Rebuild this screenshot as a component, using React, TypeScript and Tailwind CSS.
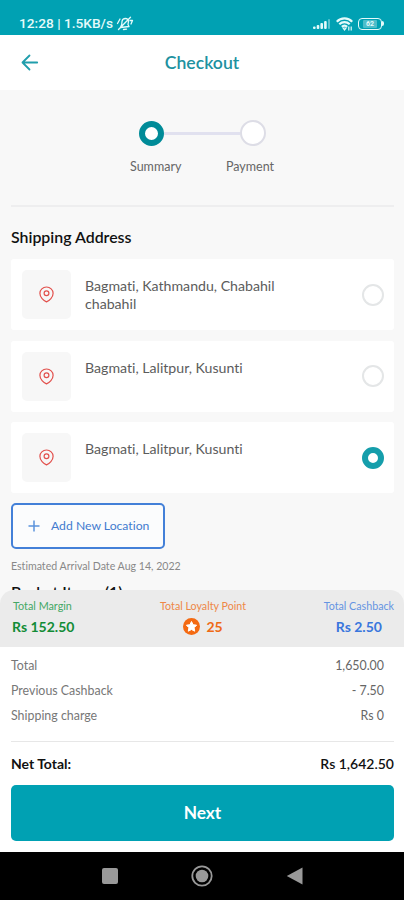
const addresses = [
  { id: 1, text: 'Bagmati, Kathmandu, Chabahil chabahil', selected: false },
  { id: 2, text: 'Bagmati, Lalitpur, Kusunti', selected: false },
  { id: 3, text: 'Bagmati, Lalitpur, Kusunti', selected: true },
]

const charges = [
  { label: 'Total', value: '1,650.00' },
  { label: 'Previous Cashback', value: '- 7.50' },
  { label: 'Shipping charge', value: 'Rs 0' },
]

function StatusBar() {
  return (
    <div className="flex h-[35px] shrink-0 items-end justify-between bg-[#00a1b3] pb-[4px] pl-[19px] pr-[20px] text-[#e4fafa]">
      <div className="flex items-center gap-[3px] font-['Roboto'] text-[13.700px] font-medium leading-[16px]">
        <span className="whitespace-nowrap">12:28 | 1.5KB/s</span>
        <svg width="18" height="15" viewBox="0 0 18 15" fill="none" stroke="currentColor" strokeWidth="1.300" strokeLinecap="round" strokeLinejoin="round">
          <path d="M4.500 11.500 13 10.500l-1-2 .5-3c.1-2-1.400-3-3-3S6.200 3.700 6 5.500L5.700 8.500zM7.500 13.500l3-.3M2.500 13.500 14.500 1.200M1.500 7.500 4 3M14 4.500h2.500L15 8" />
        </svg>
      </div>
      <div className="flex h-[16px] items-center gap-[5px] pt-[1px]">
        <svg width="18" height="12" viewBox="0 0 18 12" fill="currentColor">
          <rect x="0" y="8.500" width="2.600" height="2.500" rx="1" />
          <rect x="3.700" y="7" width="2.600" height="4" rx="1" />
          <rect x="7.400" y="5" width="2.600" height="6" rx="1" />
          <rect x="11.100" y="3" width="2.600" height="8" rx="1" />
          <rect x="15" y="1" width="2" height="10" rx="1" opacity=".4" />
        </svg>
        <svg width="17" height="14" viewBox="0 0 17 14" fill="none" stroke="currentColor" strokeWidth="2.200">
          <path d="M.8 4.700C5 .3 12 .3 16.200 4.700M3.300 7.300c3-2.900 7.400-2.900 10.400 0M5.800 9.800c1.600-1.500 3.800-1.500 5.400 0" />
          <path d="m7 11 1.500 2L10 11zM12.800 9.500v4M15.200 9.500v4" strokeWidth="1.200" />
        </svg>
        <div className="flex items-center">
          <div className="flex h-[12px] w-[24px] items-center justify-center rounded-[4px] border-[1.500px] border-current">
            <span className="rounded-[1px] bg-white/30 px-[3px] font-['Roboto'] text-[7px] font-bold leading-[8px]">62</span>
          </div>
          <div className="h-[5px] w-[2px] rounded-r bg-current" />
        </div>
      </div>
    </div>
  )
}

function Header() {
  return (
    <header className="grid h-[55px] shrink-0 grid-cols-[1fr_auto_1fr] items-center bg-white px-[21px]">
      <svg width="18" height="18" viewBox="0 0 18 18" fill="none" stroke="#209eac" strokeWidth="1.800" strokeLinecap="round" strokeLinejoin="round">
        <path d="M16.200 8.500H1.500M8.500 1.500 1.500 8.500l7 7" />
      </svg>
      <h1 className="text-[17.600px] font-semibold leading-none text-[#20919f]">Checkout</h1>
    </header>
  )
}

function Stepper() {
  return (
    <div className="ml-[11px] mr-[10px] h-[117px] border-b-2 border-[#eeeeef] pt-[30px]">
      <div className="flex items-center pl-[128px]">
        <div className="size-[25px] rounded-full border-[6px] border-[#008b98] bg-white" />
        <div className="h-[3px] w-[76px] bg-[#e1e1ef]" />
        <div className="size-[26px] rounded-full border-2 border-[#dddde6] bg-white" />
      </div>
      <div className="flex justify-between pl-[119px] pr-[120px] pt-[12px] text-[12.500px] leading-[17px] text-[#666]">
        <span>Summary</span>
        <span>Payment</span>
      </div>
    </div>
  )
}

function PinIcon() {
  return (
    <svg width="15" height="17" viewBox="0 0 15 17" fill="none" stroke="#e2504c" strokeWidth="1.200" strokeLinejoin="round">
      <path d="M7.500 15.900C4.500 14.700.9 11.400.9 7.200a6.600 6.200 0 0 1 13.200 0c0 4.200-3.600 7.500-6.600 8.700z" />
      <circle cx="7.500" cy="7.200" r="2.400" />
    </svg>
  )
}

function AddressCard({ text, selected }: { text: string; selected: boolean }) {
  return (
    <div className="flex h-[71px] items-center rounded-[3px] bg-white pl-[11px] pr-[10px]">
      <div className="flex size-[49px] shrink-0 items-center justify-center rounded-[5px] bg-[#f7f7f7]">
        <PinIcon />
      </div>
      <p className="ml-[14px] w-[220px] self-start pt-[18px] text-[14.150px] leading-[17.500px] text-[#5c5c5c]">{text}</p>
      {selected ? (
        <div className="ml-auto size-[22px] rounded-full border-[6.500px] border-[#159eab] bg-white" />
      ) : (
        <div className="ml-auto size-[22px] rounded-full border-2 border-[#e4e6e7] bg-white" />
      )}
    </div>
  )
}

function Totals() {
  return (
    <div className="flex h-[57px] shrink-0 justify-between rounded-t-[14px] bg-[#ebebeb] pl-[12px] pr-[10px] pt-[9px] text-center">
      <div className="text-left text-[#128c36]">
        <p className="pl-px text-[10.800px] leading-[14px] text-[#44a865]">Total Margin</p>
        <p className="mt-[5px] text-[14px] font-bold leading-[17px]">Rs 152.50</p>
      </div>
      <div className="pl-[8px] text-[#ef6a15]">
        <p className="text-[10.700px] leading-[14px] text-[#ee8746]">Total Loyalty Point</p>
        <div className="mt-[5px] flex items-center justify-center gap-[6px] text-[14px] font-bold leading-[17px]">
          <svg width="17" height="17" viewBox="0 0 17 17">
            <circle cx="8.500" cy="8.500" r="8.500" fill="#f46a12" />
            <path d="m8.500 3.500 1.600 3.200 3.500.5-2.500 2.500.6 3.500-3.200-1.700-3.200 1.700.6-3.500-2.500-2.500 3.500-.5z" fill="#fff" stroke="#fff" strokeLinejoin="round" />
          </svg>
          <span>25</span>
        </div>
      </div>
      <div className="text-[#3976dd]">
        <p className="text-[10.700px] leading-[14px] text-[#6594e2]">Total Cashback</p>
        <p className="mt-[5px] text-[14px] font-bold leading-[17px]">Rs 2.50</p>
      </div>
    </div>
  )
}

function NavBar() {
  return (
    <div className="grid h-[48px] shrink-0 grid-cols-[1fr_auto_1fr] items-center bg-black">
      <div className="mr-[73px] size-[16px] justify-self-end rounded-[2px] bg-[#999]" />
      <svg width="22" height="22" viewBox="0 0 22 22">
        <circle cx="11" cy="11" r="9.700" fill="none" stroke="#999" strokeWidth="1.800" />
        <circle cx="11" cy="11" r="6.300" fill="#999" />
      </svg>
      <svg className="ml-[73px]" width="17" height="18" viewBox="0 0 17 18">
        <path d="M16.500 .5v17L.8 9z" fill="#999" />
      </svg>
    </div>
  )
}

export default function App() {
  return (
    <div className="flex h-[900px] w-[404px] flex-col overflow-hidden whitespace-nowrap bg-[#f8f8f8] font-['Lato',sans-serif] [font-variant-ligatures:none]">
      <StatusBar />
      <Header />
      <main className="h-[500px] shrink-0 overflow-hidden">
        <Stepper />
        <div className="pl-[11px] pr-[10px]">
          <h2 className="pt-[20px] text-[15.900px] font-semibold leading-[20px] text-[#111]">Shipping Address</h2>
          <div className="mt-[12px] flex flex-col gap-[10.500px] whitespace-normal">
            {addresses.map((a) => (
              <AddressCard key={a.id} text={a.text} selected={a.selected} />
            ))}
          </div>
          <button className="mt-[10px] flex h-[46px] w-[154px] items-center rounded-[5px] border-2 border-[#4380d8] bg-[#fbfcfd] pl-[15px] text-[12.200px] text-[#427bcf]">
            <svg width="12" height="12" viewBox="0 0 12 12" stroke="#5b92dc" strokeWidth="1.500">
              <path d="M6 .5v11M.5 6h11" />
            </svg>
            <span className="ml-[11px]">Add New Location</span>
          </button>
          <p className="mt-[10px] text-[10.600px] leading-[14px] text-[#888]">Estimated Arrival Date Aug 14, 2022</p>
          <h2 className="mt-[9px] text-[15.900px] font-semibold leading-[20px] text-[#111]">Basket Items (1)</h2>
        </div>
      </main>
      <Totals />
      <div className="h-[205px] shrink-0 bg-white pl-[11px] pr-[10px] pt-[7px]">
        {charges.map((c) => (
          <div key={c.label} className="flex h-[25px] items-center justify-between pr-[10px] text-[12.400px] text-[#777]">
            <span>{c.label}</span>
            <span className="text-[#666]">{c.value}</span>
          </div>
        ))}
        <div className="mt-[12px] h-px bg-[#e7e7e7]" />
        <div className="flex h-[43px] items-center justify-between text-[14px] text-[#111]">
          <span className="font-bold">Net Total:</span>
          <span className="font-semibold">Rs 1,642.50</span>
        </div>
        <button className="h-[56px] w-full rounded-[5px] bg-[#00a1b3] text-[17.300px] font-bold text-white">Next</button>
      </div>
      <NavBar />
    </div>
  )
}
